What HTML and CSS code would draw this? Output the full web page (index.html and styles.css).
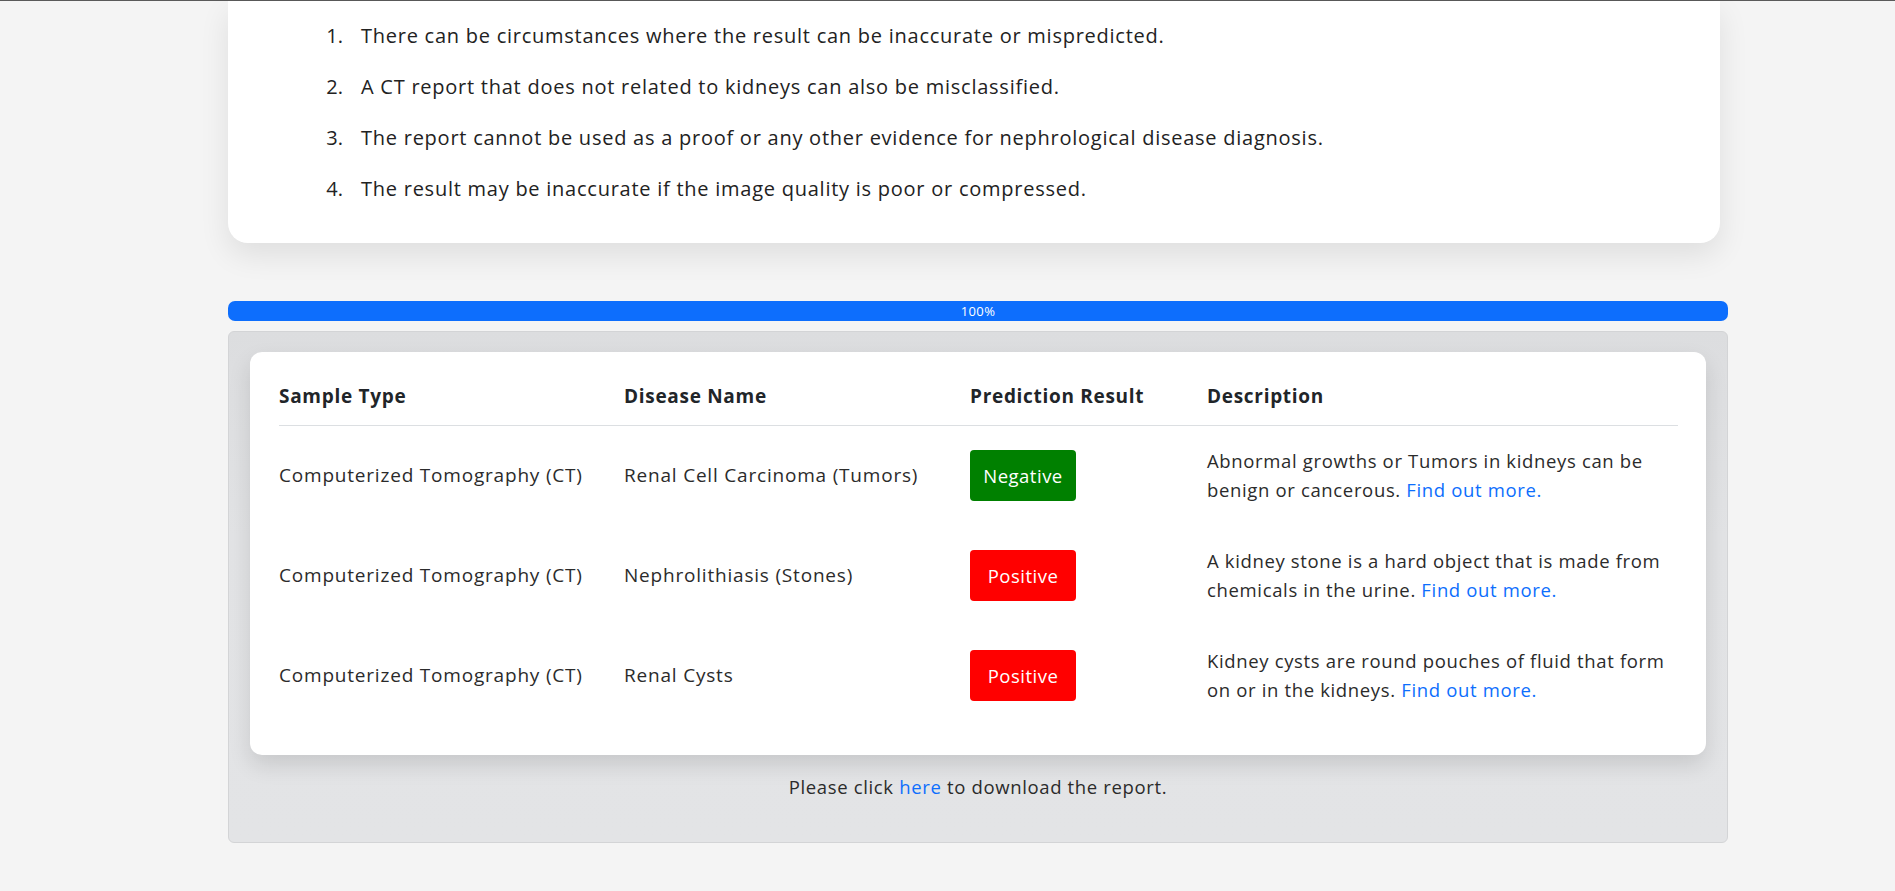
FILE: index.html
```html
<!DOCTYPE html>
<html lang="en">
<head>
<meta charset="utf-8">
<title>Kidney CT Report</title>
<link rel="stylesheet" href="styles.css">
</head>
<body>
<div class="topline"></div>
<main class="main">
  <section class="notice">
    <ol class="notes">
      <li>There can be circumstances where the result can be inaccurate or mispredicted.</li>
      <li>A CT report that does not related to kidneys can also be misclassified.</li>
      <li>The report cannot be used as a proof or any other evidence for nephrological disease diagnosis.</li>
      <li>The result may be inaccurate if the image quality is poor or compressed.</li>
    </ol>
  </section>

  <div class="progress"><div class="progress-bar">100%</div></div>

  <section class="panel">
    <div class="result-card">
      <table class="results">
        <colgroup>
          <col class="c1"><col class="c2"><col class="c3"><col class="c4">
        </colgroup>
        <thead>
          <tr><th>Sample Type</th><th>Disease Name</th><th>Prediction Result</th><th>Description</th></tr>
        </thead>
        <tbody>
          <tr>
            <td>Computerized Tomography (CT)</td>
            <td>Renal Cell Carcinoma (Tumors)</td>
            <td><span class="badge neg">Negative</span></td>
            <td class="desc">Abnormal growths or Tumors in kidneys can be<br>benign or cancerous. <a href="#">Find out more.</a></td>
          </tr>
          <tr>
            <td>Computerized Tomography (CT)</td>
            <td>Nephrolithiasis (Stones)</td>
            <td><span class="badge pos">Positive</span></td>
            <td class="desc">A kidney stone is a hard object that is made from<br>chemicals in the urine. <a href="#">Find out more.</a></td>
          </tr>
          <tr>
            <td>Computerized Tomography (CT)</td>
            <td>Renal Cysts</td>
            <td><span class="badge pos">Positive</span></td>
            <td class="desc">Kidney cysts are round pouches of fluid that form<br>on or in the kidneys. <a href="#">Find out more.</a></td>
          </tr>
        </tbody>
      </table>
    </div>
    <p class="download">Please click <a href="#">here</a> to download the report.</p>
  </section>
</main>
</body>
</html>
```

FILE: styles.css
```css
* { box-sizing: border-box; }

html, body {
  margin: 0;
  padding: 0;
}

body {
  background: #f4f4f4;
  color: #212529;
  font-family: "Open Sans", "Noto Sans", "DejaVu Sans", sans-serif;
  height: 891px;
  overflow: hidden;
}

.topline {
  height: 1px;
  background: #5a5a5a;
}

.main {
  padding-left: 228px;
  width: 1728px;
}

.notice {
  width: 1492px;
  background: #fff;
  border-radius: 0 0 20px 20px;
  box-shadow: 0 12px 30px rgba(0, 0, 0, 0.09);
  padding: 20px 0 40px;
}

.notes {
  margin: 0;
  padding: 0;
  list-style: none;
  counter-reset: note;
  font-size: 20px;
  letter-spacing: 0.75px;
  line-height: 29px;
  color: #222;
}

.notes li {
  display: flex;
  counter-increment: note;
  margin-bottom: 22px;
}

.notes li::before {
  content: counter(note) ".";
  width: 115px;
  flex: none;
  text-align: right;
  margin-right: 18px;
  letter-spacing: 0;
}

.notes li:last-child { margin-bottom: 0; }

.progress {
  margin-top: 58px;
  height: 20px;
  width: 1500px;
  border-radius: 7px;
  overflow: hidden;
  background: #e9ecef;
}

.progress-bar {
  height: 100%;
  width: 100%;
  background: #0d6efd;
  color: #fff;
  font-size: 13px;
  letter-spacing: 0.4px;
  line-height: 20px;
  text-align: center;
}

.panel {
  margin-top: 10px;
  width: 1500px;
  border: 1px solid #d3d4d6;
  border-radius: 6px;
  background: linear-gradient(180deg, #dcdddf 0%, #e2e3e5 40%, #e3e4e6 100%);
  padding: 20px 21px 41px;
}

.result-card {
  background: #fff;
  border-radius: 12px;
  box-shadow: 0 10px 22px rgba(0, 0, 0, 0.12);
  padding: 16px 28px 30px 29px;
}

.results {
  width: 100%;
  border-collapse: collapse;
  table-layout: fixed;
  font-size: 19px;
  letter-spacing: 0.8px;
}

.c1 { width: 345px; }
.c2 { width: 346px; }
.c3 { width: 237px; }

.results th {
  text-align: left;
  font-weight: 700;
  font-size: 19px;
  letter-spacing: 0.7px;
  height: 57px;
  padding: 0;
  vertical-align: middle;
  border-bottom: 1px solid #dcdfe2;
  color: #212529;
}

.results td {
  height: 100px;
  padding: 0;
  vertical-align: middle;
  line-height: 29px;
  color: #2b2b2b;
}

.results td.desc {
  font-size: 18.5px;
  letter-spacing: 0.65px;
  white-space: nowrap;
}

a {
  color: #0d6efd;
  text-decoration: none;
}

.badge {
  display: inline-flex;
  align-items: center;
  justify-content: center;
  width: 106px;
  height: 51px;
  border-radius: 4px;
  color: #fff;
  font-size: 18.5px;
  letter-spacing: 0.5px;
  vertical-align: middle;
}

.badge.neg { background: #008000; }
.badge.pos { background: #ff0000; }

.download {
  margin: 17px 0 0;
  text-align: center;
  font-size: 18.5px;
  letter-spacing: 0.65px;
  line-height: 29px;
  color: #2b2b2b;
}
```
